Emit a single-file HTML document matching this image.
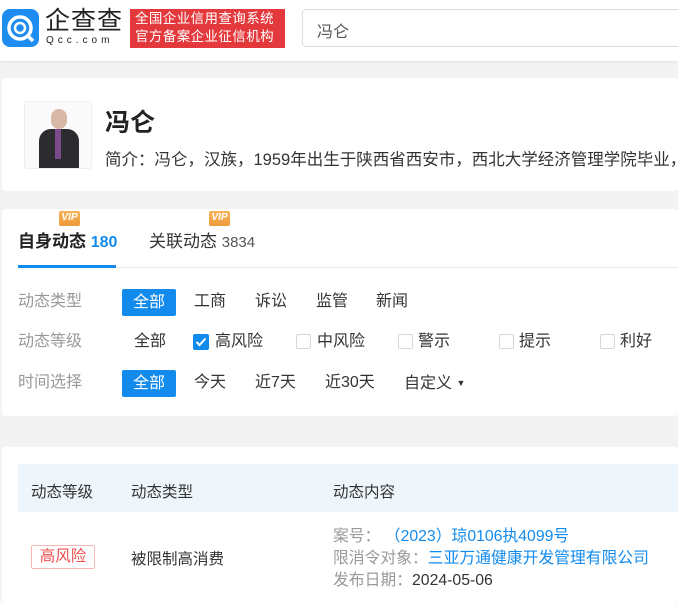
<!DOCTYPE html>
<html><head><meta charset="utf-8"><style>
*{margin:0;padding:0;box-sizing:border-box}
body{width:678px;height:603px;overflow:hidden;background:#f3f3f3;font-family:"Liberation Sans","Noto Sans CJK SC",sans-serif;color:#333;position:relative}
.a{position:absolute;white-space:nowrap}
.hdr{position:absolute;left:0;top:0;width:678px;height:61px;background:#fff;box-shadow:0 1px 3px rgba(0,0,0,.08)}
.card{position:absolute;left:2px;width:676px;background:#fff;border-radius:4px;overflow:hidden}
.lbl{color:#999;font-size:16px;line-height:20px}
.opt{font-size:16px;color:#333;line-height:20px}
.btn{position:absolute;background:#128bed;color:#fff;font-size:16px;border-radius:2px;text-align:center;line-height:27px;width:54px;height:27px}
.cb{position:absolute;width:15px;height:15px;border:1px solid #d6d6d6;border-radius:2px;background:#fff}
.vip{position:absolute;width:21px;height:15px;background:linear-gradient(#f7b35a,#ee9a3a);color:#fff;font-size:10px;font-weight:bold;font-style:italic;text-align:center;line-height:14px;border-radius:2px}
</style></head><body>
<div class="hdr">
 <div class="a" style="left:2px;top:9px;width:37px;height:38px;border-radius:8px;background:#1f8df0"></div>
 <svg class="a" style="left:2px;top:9px" width="37" height="38" viewBox="0 0 37 38"><circle cx="18" cy="19" r="11" fill="none" stroke="#fff" stroke-width="3.5"/><circle cx="18" cy="19" r="5" fill="none" stroke="#fff" stroke-width="2.5"/><path d="M26 27l5 5" stroke="#fff" stroke-width="3.5"/></svg>
 <div class="a" style="left:45px;top:6px;font-size:25px;line-height:30px;color:#222;letter-spacing:1px">企查查</div>
 <div class="a" style="left:46px;top:35px;font-size:10px;line-height:12px;color:#222;letter-spacing:4px">Qcc.com</div>
 <div class="a" style="left:130px;top:9px;width:155px;height:39px;background:#e4393c;color:#fff;font-size:13.5px;line-height:18px;padding:1px 0 0 5px;letter-spacing:0.4px">全国企业信用查询系统<br>官方备案企业征信机构</div>
 <div class="a" style="left:302px;top:9px;width:376px;height:38px;border:1px solid #ddd;border-right:none;border-radius:4px 0 0 4px;font-size:16px;color:#555;padding:8px 0 0 14px">冯仑</div>
</div>
<div class="card" style="top:78px;height:113px">
 <div class="a" style="left:22px;top:23px;width:68px;height:68px;border:1px solid #eee;border-radius:3px;background:#fafafa;overflow:hidden">
  <div class="a" style="left:26px;top:7px;width:16px;height:20px;border-radius:8px;background:#d9b7a6"></div>
  <div class="a" style="left:14px;top:27px;width:40px;height:40px;border-radius:12px 12px 0 0;background:#2c2c30"></div>
  <div class="a" style="left:30px;top:27px;width:6px;height:30px;background:#7a4a8a"></div>
 </div>
 <div class="a" style="left:103px;top:25px;font-size:25px;font-weight:bold;color:#222">冯仑</div>
 <div class="a" style="left:103px;top:68px;font-size:16.5px;color:#333">简介：冯仑，汉族，1959年出生于陕西省西安市，西北大学经济管理学院毕业，是</div>
</div>
<div class="card" style="top:209px;height:207px">
 <div class="vip" style="left:57px;top:2px">VIP</div>
 <div class="vip" style="left:207px;top:2px">VIP</div>
 <div class="a" style="left:16px;top:18px;font-size:17px;font-weight:bold;color:#222">自身动态 <span style="color:#128bed;font-weight:bold;font-size:16px">180</span></div>
 <div class="a" style="left:147px;top:18px;font-size:17px;color:#333">关联动态 <span style="color:#555;font-size:15px">3834</span></div>
 <div class="a" style="left:16px;top:56px;width:98px;height:3px;background:#128bed"></div>
 <div class="a" style="left:114px;top:58px;width:562px;height:1px;background:#e8e8e8"></div>
 <div class="a lbl" style="left:16px;top:83px">动态类型</div>
 <div class="btn" style="left:120px;top:80px">全部</div>
 <div class="a opt" style="left:192px;top:83px">工商</div>
 <div class="a opt" style="left:253px;top:83px">诉讼</div>
 <div class="a opt" style="left:314px;top:83px">监管</div>
 <div class="a opt" style="left:374px;top:83px">新闻</div>
 <div class="a lbl" style="left:16px;top:123px">动态等级</div>
 <div class="a opt" style="left:132px;top:123px">全部</div>
 <div class="a" style="left:191px;top:125px;width:16px;height:16px;background:#128bed;border-radius:2px"></div>
 <svg class="a" style="left:191px;top:125px" width="16" height="16"><path d="M3.5 8l3 3 6-6.5" stroke="#fff" stroke-width="2" fill="none"/></svg>
 <div class="a opt" style="left:213px;top:123px">高风险</div>
 <div class="cb" style="left:294px;top:125px"></div><div class="a opt" style="left:315px;top:123px">中风险</div>
 <div class="cb" style="left:396px;top:125px"></div><div class="a opt" style="left:416px;top:123px">警示</div>
 <div class="cb" style="left:497px;top:125px"></div><div class="a opt" style="left:517px;top:123px">提示</div>
 <div class="cb" style="left:598px;top:125px"></div><div class="a opt" style="left:618px;top:123px">利好</div>
 <div class="a lbl" style="left:16px;top:164px">时间选择</div>
 <div class="btn" style="left:120px;top:161px">全部</div>
 <div class="a opt" style="left:192px;top:164px">今天</div>
 <div class="a opt" style="left:253px;top:164px">近7天</div>
 <div class="a opt" style="left:323px;top:164px">近30天</div>
 <div class="a opt" style="left:402px;top:164px">自定义 <span style="font-size:9px;vertical-align:2px">▼</span></div>
</div>
<div class="card" style="top:447px;height:156px">
 <div class="a" style="left:16px;top:17px;width:660px;height:48px;background:#eef6fb"></div>
 <div class="a" style="left:29px;top:33px;font-size:15.5px;color:#333">动态等级</div>
 <div class="a" style="left:129px;top:33px;font-size:15.5px;color:#333">动态类型</div>
 <div class="a" style="left:331px;top:33px;font-size:15.5px;color:#333">动态内容</div>
 <div class="a" style="left:29px;top:98px;width:64px;height:24px;border:1px solid #f9b5b5;border-radius:2px;color:#f04f4f;font-size:15.5px;text-align:center;line-height:22px">高风险</div>
 <div class="a" style="left:129px;top:100px;font-size:15.5px;color:#333">被限制高消费</div>
 <div class="a" style="left:331px;top:79px;font-size:15.8px;color:#999;line-height:22px">案号：&nbsp;<span style="color:#128bed">（2023）琼0106执4099号</span><br>限消令对象：<span style="color:#128bed">三亚万通健康开发管理有限公司</span><br>发布日期：<span style="color:#333">2024-05-06</span></div>
</div>
</body></html>
